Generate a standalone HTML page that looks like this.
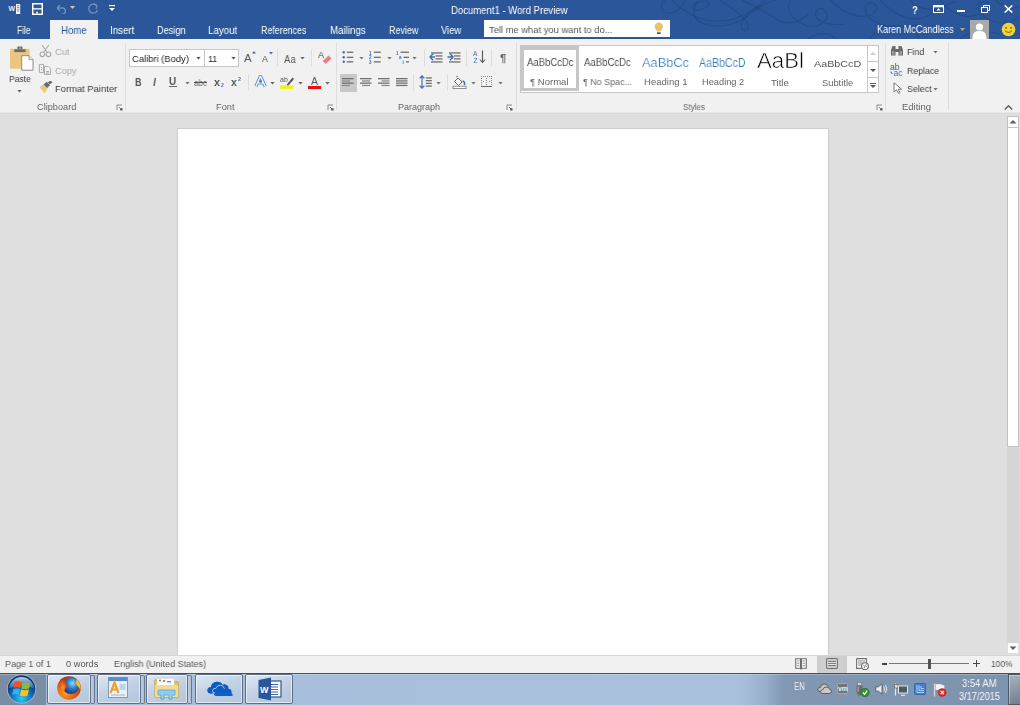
<!DOCTYPE html><html><head><meta charset="utf-8"><style>
html,body{margin:0;padding:0;width:1020px;height:705px;overflow:hidden;background:#DFDFDF}
.a{position:absolute;display:block}
.t{position:absolute;white-space:nowrap;line-height:1;font-family:"Liberation Sans",sans-serif;transform-origin:0 0;will-change:transform}
</style></head><body>
<div class="a" style="left:0px;top:0px;width:1020px;height:39px;background:#2B579A;"></div>
<svg class="a" style="left:640px;top:0px;" width="380" height="39" viewBox="0 0 380 39"><g fill="none" stroke="#1f4479" stroke-opacity="0.55" stroke-width="1.1">
<path d="M25 0 C18 6 22 14 31 13 C38 12 43 5 46 0"/>
<path d="M32 0 C42 10 52 17 66 20 C84 23 100 20 118 6 L126 0"/>
<path d="M58 2 C48 6 52 13 62 9 C70 6 72 1 64 1 C56 1 54 6 54 12 C54 20 62 25 76 26 C96 26 108 16 122 6"/>
<path d="M80 0 C92 8 104 16 108 24 C110 30 104 33 102 28 C100 22 106 14 116 8 C124 4 130 2 136 0"/>
<path d="M102 0 C114 6 126 12 138 20 C150 26 160 22 168 14"/>
<path d="M150 0 C146 10 152 22 168 26 C180 28 190 20 186 12 C182 6 174 8 176 16 C178 22 190 26 204 24"/>
<path d="M190 0 C200 10 214 18 226 16 C238 14 240 4 232 3 C224 2 222 12 232 20 C244 28 262 30 280 24"/>
<path d="M230 39 C236 30 248 24 262 26 C276 28 280 38 278 39"/>
<path d="M240 0 C252 12 266 22 282 18 C296 14 300 4 316 2"/>
<path d="M270 0 C276 8 290 12 300 8"/>
<path d="M300 0 C310 14 326 20 340 14 C352 8 350 0 342 2 C334 4 338 14 350 20 C362 26 374 22 380 16"/>
<path d="M320 39 C330 30 346 30 360 34"/>
<path d="M168 39 C176 32 190 32 196 39"/>
<path d="M356 0 C362 8 372 10 380 6"/>
</g></svg>
<svg class="a" style="left:8px;top:3px;" width="13" height="12" viewBox="0 0 13 12"><text x="0.6" y="8.2" font-family="Liberation Sans" font-weight="bold" font-size="7" fill="#e8eef8">W</text><rect x="8" y="1" width="4.2" height="10" fill="#fff"/><path d="M8.8 2.6h2.6M8.8 4.4h2.6M8.8 6.2h2.6M8.8 8h2.6" stroke="#2B579A" stroke-width="0.7"/></svg>
<svg class="a" style="left:32px;top:3px;" width="11" height="12" viewBox="0 0 11 12"><path d="M0.75 0.75h9.5v10.5h-9.5z" fill="none" stroke="#fff" stroke-width="1.5"/><rect x="0.5" y="5.2" width="10" height="1.3" fill="#fff"/><rect x="2.5" y="7.5" width="6" height="2.6" fill="#2B579A"/><rect x="4.2" y="8.6" width="1.6" height="2" fill="#fff"/></svg>
<svg class="a" style="left:55px;top:3px;" width="12" height="11" viewBox="0 0 12 11"><path d="M2 5 L5 2 M2 5 L5 8 M2 5 H8 A3.2 3.2 0 0 1 8 11.2 H6" fill="none" stroke="#6f8fc4" stroke-width="1.3"/></svg>
<svg class="a" style="left:70px;top:6px;" width="6" height="4" viewBox="0 0 6 4"><path d="M0 0h5l-2.5 3z" fill="#d8c9a8"/></svg>
<svg class="a" style="left:87px;top:3px;" width="12" height="11" viewBox="0 0 12 11"><path d="M9.5 2.5 A4.5 4.5 0 1 0 10.5 7" fill="none" stroke="#6f8fc4" stroke-width="1.3"/><path d="M7 0.5 L10 2.5 L9 6" fill="none" stroke="#6f8fc4" stroke-width="1.1"/></svg>
<svg class="a" style="left:109px;top:5px;" width="6" height="7" viewBox="0 0 6 7"><rect x="0" y="0" width="6" height="1.2" fill="#fff"/><path d="M0 3h6l-3 3z" fill="#fff"/></svg>
<div class="t" style="left:451px;top:6px;font-size:10.3px;color:#fff;transform:scaleX(0.9273);">Document1 - Word Preview</div>
<div class="t" style="left:912.3px;top:5px;font-size:11px;color:#fff;transform:scaleX(0.8632);font-weight:bold;">?</div>
<svg class="a" style="left:933px;top:5px;" width="11" height="8" viewBox="0 0 11 8"><rect x="0.5" y="0.5" width="10" height="7" fill="none" stroke="#fff" stroke-width="1"/><rect x="0.5" y="0.5" width="10" height="1.8" fill="#fff"/><path d="M5.5 3 L3.5 5.5 H7.5z" fill="#fff"/></svg>
<div class="a" style="left:957px;top:10px;width:8px;height:1.5px;background:#fff;"></div>
<svg class="a" style="left:981px;top:5px;" width="9" height="8" viewBox="0 0 9 8"><rect x="0.5" y="2.5" width="6" height="5" fill="none" stroke="#fff" stroke-width="1"/><path d="M2.5 2.5 V0.5 H8.5 V5.5 H6.5" fill="none" stroke="#fff" stroke-width="1"/></svg>
<svg class="a" style="left:1004px;top:5px;" width="9" height="8" viewBox="0 0 9 8"><path d="M0.7 0.5 L8.3 7.5 M8.3 0.5 L0.7 7.5" stroke="#fff" stroke-width="1.6"/></svg>
<div class="a" style="left:50px;top:20px;width:48px;height:19px;background:#F1F1F1;"></div>
<div class="t" style="left:16.5px;top:25px;font-size:10.6px;color:#fff;transform:scaleX(0.7904);">File</div>
<div class="t" style="left:61px;top:25px;font-size:10.6px;color:#2B579A;transform:scaleX(0.9125);">Home</div>
<div class="t" style="left:109.7px;top:25px;font-size:10.6px;color:#fff;transform:scaleX(0.9166);">Insert</div>
<div class="t" style="left:156.5px;top:25px;font-size:10.6px;color:#fff;transform:scaleX(0.8698);">Design</div>
<div class="t" style="left:208.3px;top:25px;font-size:10.6px;color:#fff;transform:scaleX(0.9206);">Layout</div>
<div class="t" style="left:260.7px;top:25px;font-size:10.6px;color:#fff;transform:scaleX(0.8357);">References</div>
<div class="t" style="left:329.6px;top:25px;font-size:10.6px;color:#fff;transform:scaleX(0.9182);">Mailings</div>
<div class="t" style="left:388.6px;top:25px;font-size:10.6px;color:#fff;transform:scaleX(0.8431);">Review</div>
<div class="t" style="left:441.2px;top:25px;font-size:10.6px;color:#fff;transform:scaleX(0.8910);">View</div>
<div class="a" style="left:484px;top:20px;width:186px;height:17px;background:#fff;"></div>
<div class="t" style="left:489.2px;top:25px;font-size:9.8px;color:#555;transform:scaleX(0.9567);">Tell me what you want to do...</div>
<svg class="a" style="left:654px;top:22px;" width="10" height="13" viewBox="0 0 10 13"><circle cx="4.8" cy="4.6" r="4.2" fill="#EBC06A"/><path d="M2 6.5 L3 9.6 H6.6 L7.6 6.5z" fill="#EBC06A"/><rect x="2.8" y="10.3" width="4" height="1.8" rx="0.8" fill="#555"/></svg>
<div class="t" style="left:877.3px;top:25px;font-size:10px;color:#fff;transform:scaleX(0.9079);">Karen McCandless</div>
<svg class="a" style="left:960px;top:28px;" width="5" height="3" viewBox="0 0 5 3"><path d="M0 0h5l-2.5 3z" fill="#b9a77e"/></svg>
<div class="a" style="left:970px;top:20px;width:19px;height:19px;background:#a9a9a9;"></div>
<svg class="a" style="left:970px;top:20px;" width="19" height="19" viewBox="0 0 19 19"><circle cx="9.5" cy="7" r="3.6" fill="#fff"/><path d="M2.5 19 C2.5 12 5.5 11 9.5 11 S16.5 12 16.5 19z" fill="#fff"/></svg>
<svg class="a" style="left:1001px;top:22px;" width="15" height="15" viewBox="0 0 15 15"><circle cx="7.5" cy="7.5" r="6.8" fill="#f2d43a"/><circle cx="5" cy="5.8" r="0.9" fill="#6b5a10"/><circle cx="10" cy="5.8" r="0.9" fill="#6b5a10"/><path d="M4 8.8 Q7.5 12 11 8.8" fill="none" stroke="#6b5a10" stroke-width="0.9"/></svg>
<div class="a" style="left:0px;top:39px;width:1020px;height:74px;background:#F1F1F1;"></div>
<div class="a" style="left:0px;top:112px;width:1020px;height:1px;background:#EAEAEA;"></div>
<div class="a" style="left:0px;top:113px;width:1020px;height:1px;background:#D9D9D9;"></div>
<svg class="a" style="left:9px;top:46px;" width="25" height="25" viewBox="0 0 25 25"><rect x="1" y="2.7" width="19.7" height="20.1" rx="1.2" fill="#EAC67E"/>
<rect x="5.3" y="3.3" width="11.2" height="2.8" fill="#6a6a6a"/>
<path d="M8.4 3.5 V1.2 Q8.4 0.6 9 0.6 H12.8 Q13.4 0.6 13.4 1.2 V3.5z" fill="#6a6a6a"/>
<rect x="10.2" y="1.6" width="1.6" height="1.2" fill="#EAC67E"/>
<path d="M12.7 9.7 H20 L24 13.7 V24.2 H12.7z" fill="#fff" stroke="#8a8a8a" stroke-width="1"/>
<path d="M20 9.7 V13.7 H24" fill="#e8e8e8" stroke="#8a8a8a" stroke-width="0.8"/></svg>
<div class="t" style="left:9px;top:74px;font-size:9.6px;color:#3c3c3c;transform:scaleX(0.8880);">Paste</div>
<svg class="a" style="left:17.4px;top:90px;" width="5" height="3" viewBox="0 0 5 3"><path d="M0.3 0h4.4l-2.2 2.6z" fill="#666"/></svg>
<svg class="a" style="left:39px;top:44px;" width="13" height="14" viewBox="0 0 13 14"><g fill="none" stroke="#a9a9a9" stroke-width="1.2">
<path d="M3 1 L8.3 8.5 M9.8 1 L4.5 8.5"/>
<circle cx="3.4" cy="10.3" r="2.3"/><circle cx="9.5" cy="10.3" r="2.3"/></g></svg>
<div class="t" style="left:54.9px;top:47px;font-size:9.6px;color:#a9a9a9;transform:scaleX(0.9706);">Cut</div>
<svg class="a" style="left:38px;top:63px;" width="14" height="13" viewBox="0 0 14 13"><g fill="none" stroke="#a9a9a9" stroke-width="1">
<path d="M1.4 1.4 H5.5 V9.6 H1.4z"/><path d="M6.4 3.4 H10.6 L12.6 5.4 V11.4 H6.4z"/>
<path d="M8 8.5h3M8 10h3M3 4.5h1.2M3 6.5h1.2"/></g></svg>
<div class="t" style="left:54.9px;top:66px;font-size:9.6px;color:#a9a9a9;transform:scaleX(0.9638);">Copy</div>
<svg class="a" style="left:39px;top:81px;" width="14" height="13" viewBox="0 0 14 13"><path d="M0.5 6.2 L4.8 3 L8.6 7.4 L5.6 12.3z" fill="#EAC67E"/>
<path d="M4.6 3.4 L7.8 0.8 L11 4.2 L8.2 7z" fill="#6a6a6a"/>
<path d="M8.8 1.6 L11.6 -0.6 L13.4 1.4 L10.8 3.6z" fill="#6a6a6a"/></svg>
<div class="t" style="left:54.7px;top:84px;font-size:9.6px;color:#3c3c3c;transform:scaleX(0.9781);">Format Painter</div>
<div class="t" style="left:36.7px;top:103px;font-size:8.9px;color:#666;transform:scaleX(1.0369);">Clipboard</div>
<svg class="a" style="left:116px;top:104px;" width="7" height="7" viewBox="0 0 7 7"><path d="M1 6V1H6" fill="none" stroke="#8a8a8a" stroke-width="1"/><path d="M3 3L5.5 5.5" stroke="#777" stroke-width="0.9"/><rect x="4.2" y="4.2" width="2.3" height="2.3" fill="#555"/></svg>
<div class="a" style="left:125px;top:43px;width:1px;height:67px;background:#dedede;"></div>
<div class="a" style="left:129px;top:49px;width:76px;height:18px;background:#fff;box-sizing:border-box;border:1px solid #c6c6c6;"></div>
<div class="a" style="left:204px;top:49px;width:35px;height:18px;background:#fff;box-sizing:border-box;border:1px solid #c6c6c6;"></div>
<div class="t" style="left:132.4px;top:54px;font-size:9.6px;color:#222;transform:scaleX(0.9802);">Calibri (Body)</div>
<svg class="a" style="left:196px;top:57px;" width="5" height="3" viewBox="0 0 5 3"><path d="M0.3 0h4.4l-2.2 2.6z" fill="#555"/></svg>
<div class="t" style="left:207.6px;top:54px;font-size:9.6px;color:#222;transform:scaleX(0.9232);">11</div>
<svg class="a" style="left:230.5px;top:57px;" width="5" height="3" viewBox="0 0 5 3"><path d="M0.3 0h4.4l-2.2 2.6z" fill="#555"/></svg>
<div class="t" style="left:244px;top:53px;font-size:11.5px;color:#555;">A</div>
<svg class="a" style="left:251.5px;top:51px;" width="4" height="3" viewBox="0 0 4 3"><path d="M0 2.5h4l-2-2.5z" fill="#3d6fb6"/></svg>
<div class="t" style="left:262px;top:55px;font-size:8.8px;color:#555;">A</div>
<svg class="a" style="left:268.5px;top:51.5px;" width="4" height="3" viewBox="0 0 4 3"><path d="M0 0h4l-2 2.5z" fill="#3d6fb6"/></svg>
<div class="a" style="left:277px;top:49px;width:1px;height:17px;background:#dedede;"></div>
<div class="t" style="left:284px;top:54px;font-size:11.2px;color:#555;transform:scaleX(0.8614);">Aa</div>
<svg class="a" style="left:299.5px;top:57px;" width="5" height="3" viewBox="0 0 5 3"><path d="M0.3 0h4.4l-2.2 2.6z" fill="#666"/></svg>
<div class="a" style="left:311px;top:49px;width:1px;height:17px;background:#dedede;"></div>
<svg class="a" style="left:318px;top:50px;" width="14" height="14" viewBox="0 0 14 14"><text x="0" y="8" font-family="Liberation Sans" font-size="9" fill="#555">A</text>
<path d="M4.5 11.5 L10.5 5.5 L13.5 8.5 L7.5 14z" fill="#e57f85"/><path d="M4.5 11.5 L7.5 14" stroke="#fff" stroke-width="0.7"/></svg>
<div class="t" style="left:134.6px;top:77px;font-size:10.6px;color:#555;transform:scaleX(0.8622);font-weight:bold;">B</div>
<div class="t" style="left:153.4px;top:77px;font-size:10.6px;color:#666;font-weight:bold;font-style:italic;">I</div>
<div class="t" style="left:169.4px;top:77px;font-size:10px;color:#555;transform:scaleX(0.9831);font-weight:bold;">U</div>
<div class="a" style="left:169.4px;top:85.6px;width:7.2px;height:1px;background:#666;"></div>
<svg class="a" style="left:185px;top:81.5px;" width="5" height="3" viewBox="0 0 5 3"><path d="M0.3 0h4.4l-2.2 2.6z" fill="#777"/></svg>
<div class="t" style="left:194.1px;top:79px;font-size:9px;color:#666;transform:scaleX(0.8890);">abc</div>
<div class="a" style="left:194px;top:82px;width:13px;height:1px;background:#555;"></div>
<div class="t" style="left:213.5px;top:77px;font-size:11.2px;color:#555;transform:scaleX(0.9633);font-weight:bold;">x</div>
<div class="t" style="left:220.6px;top:83px;font-size:5px;color:#3d6fb6;transform:scaleX(0.9351);font-weight:bold;">2</div>
<div class="t" style="left:231.4px;top:77px;font-size:11.2px;color:#555;transform:scaleX(0.9311);font-weight:bold;">x</div>
<div class="t" style="left:238px;top:77px;font-size:5px;color:#3d6fb6;transform:scaleX(1.0790);font-weight:bold;">2</div>
<div class="a" style="left:248px;top:74px;width:1px;height:16px;background:#dedede;"></div>
<svg class="a" style="left:254px;top:75px;" width="13" height="13" viewBox="0 0 13 13"><path d="M1.8 11.5 L6.5 1.2 L11.2 11.5 M3.8 7.8 H9.2" fill="none" stroke="#5b8fd0" stroke-width="3.2" stroke-linejoin="round"/><path d="M1.8 11.5 L6.5 1.2 L11.2 11.5 M3.8 7.8 H9.2" fill="none" stroke="#fff" stroke-width="1.3" stroke-linejoin="round"/><path d="M6.5 4.5 L7.8 7.5 H5.2z" fill="#3d6fb6"/></svg>
<svg class="a" style="left:270px;top:82px;" width="5" height="3" viewBox="0 0 5 3"><path d="M0.3 0h4.4l-2.2 2.6z" fill="#666"/></svg>
<svg class="a" style="left:280px;top:75px;" width="15" height="15" viewBox="0 0 15 15"><text x="0" y="7" font-family="Liberation Sans" font-size="7" fill="#555">ab</text>
<path d="M6.5 10 L12.5 2.5 L14 4 L8 11z" fill="#555"/>
<rect x="0.2" y="10.5" width="13.3" height="3.3" fill="#f7f000"/></svg>
<svg class="a" style="left:298px;top:82px;" width="5" height="3" viewBox="0 0 5 3"><path d="M0.3 0h4.4l-2.2 2.6z" fill="#666"/></svg>
<div class="t" style="left:310.6px;top:76px;font-size:10.5px;color:#555;">A</div>
<div class="a" style="left:307.6px;top:85.5px;width:13.2px;height:3.3px;background:#e81010;"></div>
<svg class="a" style="left:325px;top:82px;" width="5" height="3" viewBox="0 0 5 3"><path d="M0.3 0h4.4l-2.2 2.6z" fill="#666"/></svg>
<svg class="a" style="left:327px;top:104px;" width="7" height="7" viewBox="0 0 7 7"><path d="M1 6V1H6" fill="none" stroke="#8a8a8a" stroke-width="1"/><path d="M3 3L5.5 5.5" stroke="#777" stroke-width="0.9"/><rect x="4.2" y="4.2" width="2.3" height="2.3" fill="#555"/></svg>
<div class="t" style="left:215.5px;top:103px;font-size:8.9px;color:#666;transform:scaleX(1.0388);">Font</div>
<div class="a" style="left:336px;top:43px;width:1px;height:67px;background:#dedede;"></div>
<svg class="a" style="left:342px;top:50px;" width="13" height="14" viewBox="0 0 13 14"><circle cx="1.7" cy="2.2" r="1.2" fill="#3d6fb6"/><circle cx="1.7" cy="7.3" r="1.2" fill="#3d6fb6"/><circle cx="1.7" cy="11.8" r="1.2" fill="#3d6fb6"/><rect x="4.8" y="1.6" width="6.5" height="1.3" fill="#6f6f6f"/><rect x="4.8" y="6.7" width="6.5" height="1.3" fill="#6f6f6f"/><rect x="4.8" y="11.2" width="6.5" height="1.3" fill="#6f6f6f"/></svg>
<svg class="a" style="left:359px;top:57px;" width="5" height="3" viewBox="0 0 5 3"><path d="M0.3 0h4.4l-2.2 2.6z" fill="#777"/></svg>
<svg class="a" style="left:369px;top:50px;" width="13" height="14" viewBox="0 0 13 14"><text x="0" y="4.5" font-family="Liberation Sans" font-size="4.5" font-weight="bold" fill="#3d6fb6">1</text><text x="0" y="9" font-family="Liberation Sans" font-size="4.5" font-weight="bold" fill="#3d6fb6">2</text><text x="0" y="13.5" font-family="Liberation Sans" font-size="4.5" font-weight="bold" fill="#3d6fb6">3</text><rect x="4.8" y="1.6" width="7" height="1.3" fill="#6f6f6f"/><rect x="4.8" y="6.7" width="7" height="1.3" fill="#6f6f6f"/><rect x="4.8" y="11.2" width="7" height="1.3" fill="#6f6f6f"/></svg>
<svg class="a" style="left:386.5px;top:57px;" width="5" height="3" viewBox="0 0 5 3"><path d="M0.3 0h4.4l-2.2 2.6z" fill="#777"/></svg>
<svg class="a" style="left:396px;top:50px;" width="14" height="14" viewBox="0 0 14 14"><text x="0" y="4.5" font-family="Liberation Sans" font-size="4.5" font-weight="bold" fill="#3d6fb6">1</text><text x="3" y="9" font-family="Liberation Sans" font-size="4.5" font-weight="bold" fill="#3d6fb6">a</text><text x="6.5" y="13.5" font-family="Liberation Sans" font-size="4.5" font-weight="bold" fill="#3d6fb6">i</text><rect x="4.5" y="1.6" width="8.5" height="1.3" fill="#6f6f6f"/><rect x="7.5" y="6.7" width="5.5" height="1.3" fill="#6f6f6f"/><rect x="10" y="11.2" width="3" height="1.3" fill="#6f6f6f"/></svg>
<svg class="a" style="left:412px;top:57px;" width="5" height="3" viewBox="0 0 5 3"><path d="M0.3 0h4.4l-2.2 2.6z" fill="#777"/></svg>
<div class="a" style="left:424px;top:49px;width:1px;height:17px;background:#dedede;"></div>
<svg class="a" style="left:429px;top:52px;" width="14" height="11" viewBox="0 0 14 11"><path d="M0.8 5 L4.2 1.8 M0.8 5 L4.2 8.2 M0.8 5 H6" fill="none" stroke="#3d6fb6" stroke-width="1.4"/><rect x="2" y="0.3" width="11.5" height="1.3" fill="#6f6f6f"/><rect x="2" y="9.3" width="11.5" height="1.3" fill="#6f6f6f"/><rect x="6.5" y="3.3" width="7" height="1.3" fill="#6f6f6f"/><rect x="6.5" y="6.2" width="7" height="1.3" fill="#6f6f6f"/></svg>
<svg class="a" style="left:447px;top:52px;" width="14" height="11" viewBox="0 0 14 11"><path d="M6.3 5 L2.9 1.8 M6.3 5 L2.9 8.2 M6.3 5 H0.5" fill="none" stroke="#3d6fb6" stroke-width="1.4"/><rect x="2" y="0.3" width="11.5" height="1.3" fill="#6f6f6f"/><rect x="2" y="9.3" width="11.5" height="1.3" fill="#6f6f6f"/><rect x="7" y="3.3" width="6.5" height="1.3" fill="#6f6f6f"/><rect x="7" y="6.2" width="6.5" height="1.3" fill="#6f6f6f"/></svg>
<div class="a" style="left:466px;top:49px;width:1px;height:17px;background:#dedede;"></div>
<svg class="a" style="left:473px;top:50px;" width="13" height="14" viewBox="0 0 13 14"><text x="0" y="6" font-family="Liberation Sans" font-size="6.5" fill="#3d6fb6">A</text><text x="0.5" y="13" font-family="Liberation Sans" font-size="6.5" fill="#3d6fb6">Z</text><path d="M9.5 0.5 V12.5 M6.8 9.5 L9.5 12.5 L12.2 9.5" fill="none" stroke="#555" stroke-width="1.1"/></svg>
<div class="a" style="left:491px;top:49px;width:1px;height:17px;background:#dedede;"></div>
<div class="t" style="left:499.5px;top:53px;font-size:11.5px;color:#666;font-weight:bold;">¶</div>
<div class="a" style="left:340px;top:73.5px;width:17px;height:18px;background:#c8c8c8;"></div>
<svg class="a" style="left:342px;top:78px;" width="13" height="9" viewBox="0 0 13 9"><rect x="0" y="0" width="11.5" height="1.3" fill="#6f6f6f"/><rect x="0" y="4.5" width="11.5" height="1.3" fill="#6f6f6f"/><rect x="0" y="2.3" width="8" height="1.3" fill="#8a8a8a"/><rect x="0" y="6.8" width="8" height="1.3" fill="#8a8a8a"/></svg>
<svg class="a" style="left:360px;top:78px;" width="13" height="9" viewBox="0 0 13 9"><rect x="0" y="0" width="11.5" height="1.3" fill="#6f6f6f"/><rect x="0" y="4.5" width="11.5" height="1.3" fill="#6f6f6f"/><rect x="2" y="2.3" width="8" height="1.3" fill="#8a8a8a"/><rect x="2" y="6.8" width="8" height="1.3" fill="#8a8a8a"/></svg>
<svg class="a" style="left:377.5px;top:78px;" width="13" height="9" viewBox="0 0 13 9"><rect x="0" y="0" width="11.5" height="1.3" fill="#6f6f6f"/><rect x="0" y="4.5" width="11.5" height="1.3" fill="#6f6f6f"/><rect x="3.5" y="2.3" width="8" height="1.3" fill="#8a8a8a"/><rect x="3.5" y="6.8" width="8" height="1.3" fill="#8a8a8a"/></svg>
<svg class="a" style="left:395.5px;top:78px;" width="13" height="9" viewBox="0 0 13 9"><rect x="0" y="0" width="11.5" height="1.3" fill="#6f6f6f"/><rect x="0" y="2.3" width="11.5" height="1.3" fill="#6f6f6f"/><rect x="0" y="4.5" width="11.5" height="1.3" fill="#6f6f6f"/><rect x="0" y="6.8" width="11.5" height="1.3" fill="#6f6f6f"/></svg>
<div class="a" style="left:413px;top:74px;width:1px;height:17px;background:#dedede;"></div>
<svg class="a" style="left:419px;top:75px;" width="14" height="14" viewBox="0 0 14 14"><path d="M3 0.8 V13 M0.6 3.3 L3 0.8 L5.4 3.3 M0.6 10.7 L3 13.2 L5.4 10.7" fill="none" stroke="#3d6fb6" stroke-width="1.2"/><rect x="6.8" y="2.3" width="6" height="1.3" fill="#6f6f6f"/><rect x="6.8" y="5" width="6" height="1.3" fill="#6f6f6f"/><rect x="6.8" y="7.7" width="6" height="1.3" fill="#6f6f6f"/><rect x="6.8" y="10.4" width="6" height="1.3" fill="#6f6f6f"/></svg>
<svg class="a" style="left:435.5px;top:82px;" width="5" height="3" viewBox="0 0 5 3"><path d="M0.3 0h4.4l-2.2 2.6z" fill="#777"/></svg>
<div class="a" style="left:447px;top:74px;width:1px;height:17px;background:#dedede;"></div>
<svg class="a" style="left:452px;top:75px;" width="15" height="14" viewBox="0 0 15 14"><path d="M2.5 6.5 L6 3 L10 7 L6.5 10.5z" fill="#fff" stroke="#666" stroke-width="1"/><path d="M5 2.5 V0.8" stroke="#666" stroke-width="1"/><path d="M10.5 6 Q13.5 7 12.3 10" fill="none" stroke="#3d6fb6" stroke-width="1.5"/><rect x="1" y="11.2" width="13" height="2.4" fill="#fff" stroke="#777" stroke-width="0.8"/></svg>
<svg class="a" style="left:470.5px;top:82px;" width="5" height="3" viewBox="0 0 5 3"><path d="M0.3 0h4.4l-2.2 2.6z" fill="#777"/></svg>
<svg class="a" style="left:481px;top:76px;" width="11" height="11" viewBox="0 0 11 11"><g fill="#888"><rect x="0" y="0" width="1" height="1"/><rect x="2" y="0" width="1" height="1"/><rect x="4" y="0" width="1" height="1"/><rect x="6" y="0" width="1" height="1"/><rect x="8" y="0" width="1" height="1"/><rect x="10" y="0" width="1" height="1"/><rect x="0" y="2" width="1" height="1"/><rect x="0" y="4" width="1" height="1"/><rect x="0" y="6" width="1" height="1"/><rect x="0" y="8" width="1" height="1"/><rect x="10" y="2" width="1" height="1"/><rect x="10" y="4" width="1" height="1"/><rect x="10" y="6" width="1" height="1"/><rect x="10" y="8" width="1" height="1"/><rect x="5" y="2" width="1" height="1"/><rect x="5" y="4" width="1" height="1"/><rect x="5" y="6" width="1" height="1"/><rect x="5" y="8" width="1" height="1"/><rect x="2" y="5" width="1" height="1"/><rect x="8" y="5" width="1" height="1"/></g><rect x="0" y="10" width="11" height="1" fill="#666"/></svg>
<svg class="a" style="left:497.5px;top:82px;" width="5" height="3" viewBox="0 0 5 3"><path d="M0.3 0h4.4l-2.2 2.6z" fill="#777"/></svg>
<svg class="a" style="left:506px;top:104px;" width="7" height="7" viewBox="0 0 7 7"><path d="M1 6V1H6" fill="none" stroke="#8a8a8a" stroke-width="1"/><path d="M3 3L5.5 5.5" stroke="#777" stroke-width="0.9"/><rect x="4.2" y="4.2" width="2.3" height="2.3" fill="#555"/></svg>
<div class="t" style="left:398.4px;top:103px;font-size:8.9px;color:#666;transform:scaleX(1.0153);">Paragraph</div>
<div class="a" style="left:516px;top:43px;width:1px;height:67px;background:#dedede;"></div>
<div class="a" style="left:520px;top:45px;width:359px;height:48px;background:#c6c6c6;"></div>
<div class="a" style="left:521px;top:46px;width:346px;height:46px;background:#fff;"></div>
<div class="a" style="left:521px;top:46px;width:58px;height:45px;background:#c6c6c6;"></div>
<div class="a" style="left:524px;top:49.5px;width:52px;height:38.5px;background:#fff;"></div>
<div class="t" style="left:526.6px;top:58px;font-size:10.4px;color:#222;transform:scaleX(0.9162);-webkit-text-stroke:0.15px #fff;">AaBbCcDc</div>
<div class="t" style="left:530.3px;top:78px;font-size:9.2px;color:#666;transform:scaleX(1.0391);">¶ Normal</div>
<div class="t" style="left:583.9px;top:58px;font-size:10.4px;color:#222;transform:scaleX(0.9221);-webkit-text-stroke:0.15px #fff;">AaBbCcDc</div>
<div class="t" style="left:583px;top:78px;font-size:9.2px;color:#666;transform:scaleX(0.9712);">¶ No Spac...</div>
<div class="t" style="left:641.6px;top:56px;font-size:13.6px;color:#2e74b5;transform:scaleX(0.9420);-webkit-text-stroke:0.2px #fff;">AaBbCc</div>
<div class="t" style="left:643.5px;top:78px;font-size:9.2px;color:#666;transform:scaleX(1.0371);">Heading 1</div>
<div class="t" style="left:699.2px;top:57px;font-size:12px;color:#2e74b5;transform:scaleX(0.8844);-webkit-text-stroke:0.15px #fff;">AaBbCcD</div>
<div class="t" style="left:701.7px;top:78px;font-size:9.2px;color:#666;transform:scaleX(1.0085);">Heading 2</div>
<div class="t" style="left:757.1px;top:50px;font-size:22px;color:#000;transform:scaleX(1.0092);-webkit-text-stroke:0.6px #fff;">AaBl</div>
<div class="t" style="left:770.6px;top:79px;font-size:9.2px;color:#666;transform:scaleX(1.0447);">Title</div>
<div class="t" style="left:814.4px;top:59px;font-size:9.8px;color:#555;transform:scaleX(1.0970);">AaBbCcD</div>
<div class="t" style="left:821.8px;top:79px;font-size:9.2px;color:#666;transform:scaleX(1.0168);">Subtitle</div>
<div class="a" style="left:867px;top:45px;width:12px;height:48px;background:#c6c6c6;"></div>
<div class="a" style="left:868px;top:46px;width:10px;height:15px;background:#fff;"></div>
<div class="a" style="left:868px;top:62px;width:10px;height:15px;background:#fff;"></div>
<div class="a" style="left:868px;top:78px;width:10px;height:14px;background:#fff;"></div>
<svg class="a" style="left:870px;top:52px;" width="6" height="3" viewBox="0 0 6 3"><path d="M0 3h6l-3-3z" fill="#ccc"/></svg>
<svg class="a" style="left:870px;top:69px;" width="6" height="3" viewBox="0 0 6 3"><path d="M0 0h6l-3 3z" fill="#555"/></svg>
<svg class="a" style="left:870px;top:83px;" width="6" height="5" viewBox="0 0 6 5"><rect x="0" y="0" width="6" height="1" fill="#555"/><path d="M0 2h6l-3 3z" fill="#555"/></svg>
<div class="t" style="left:683px;top:103px;font-size:8.9px;color:#666;transform:scaleX(0.9077);">Styles</div>
<svg class="a" style="left:876px;top:104px;" width="7" height="7" viewBox="0 0 7 7"><path d="M1 6V1H6" fill="none" stroke="#8a8a8a" stroke-width="1"/><path d="M3 3L5.5 5.5" stroke="#777" stroke-width="0.9"/><rect x="4.2" y="4.2" width="2.3" height="2.3" fill="#555"/></svg>
<div class="a" style="left:885px;top:43px;width:1px;height:67px;background:#dedede;"></div>
<svg class="a" style="left:890px;top:45px;" width="14" height="11" viewBox="0 0 14 11"><path d="M1 5 L2.5 1 H5.5 V4 H8.5 V1 H11.5 L13 5 V10.5 H8.5 V7 H5.5 V10.5 H1z" fill="#6a6a6a"/><rect x="2" y="6" width="2.5" height="4" fill="#999"/><rect x="9.5" y="6" width="2.5" height="4" fill="#999"/></svg>
<div class="t" style="left:906.8px;top:47px;font-size:9.6px;color:#3c3c3c;transform:scaleX(0.9317);">Find</div>
<svg class="a" style="left:932.5px;top:51px;" width="5" height="3" viewBox="0 0 5 3"><path d="M0.3 0h4.4l-2.2 2.6z" fill="#777"/></svg>
<svg class="a" style="left:890px;top:63px;" width="15" height="13" viewBox="0 0 15 13"><text x="0" y="6.8" font-family="Liberation Sans" font-size="8.6" fill="#555">ab</text><text x="3.6" y="12.8" font-family="Liberation Sans" font-size="8.6" fill="#3d6fb6">ac</text><path d="M0.8 8.5 L2.2 11" stroke="#3d6fb6" stroke-width="1.1"/></svg>
<div class="t" style="left:906.8px;top:66px;font-size:9.6px;color:#3c3c3c;transform:scaleX(0.9142);">Replace</div>
<svg class="a" style="left:893px;top:82px;" width="10" height="12" viewBox="0 0 10 12"><path d="M1 0.8 V10 L3.5 7.8 L5.5 11.5 L7 10.8 L5.2 7.2 H8.5z" fill="#fff" stroke="#777" stroke-width="1"/></svg>
<div class="t" style="left:906.8px;top:84px;font-size:9.6px;color:#3c3c3c;transform:scaleX(0.9257);">Select</div>
<svg class="a" style="left:933.2px;top:88px;" width="5" height="3" viewBox="0 0 5 3"><path d="M0.3 0h4.4l-2.2 2.6z" fill="#777"/></svg>
<div class="t" style="left:902px;top:103px;font-size:8.9px;color:#666;transform:scaleX(1.0657);">Editing</div>
<div class="a" style="left:948px;top:43px;width:1px;height:67px;background:#dedede;"></div>
<svg class="a" style="left:1004px;top:105px;" width="9" height="5" viewBox="0 0 9 5"><path d="M0.8 4.5 L4.5 0.8 L8.2 4.5" fill="none" stroke="#555" stroke-width="1.3"/></svg>
<div class="a" style="left:0px;top:114px;width:1020px;height:541px;background:#DFDFDF;"></div>
<div class="a" style="left:177px;top:128px;width:652px;height:527px;background:#CDCDCD;"></div>
<div class="a" style="left:178px;top:129px;width:650px;height:526px;background:#fff;"></div>
<div class="a" style="left:1007px;top:116px;width:12px;height:12px;background:#C2C2C2;"></div>
<div class="a" style="left:1008px;top:117px;width:10px;height:10px;background:#fff;"></div>
<svg class="a" style="left:1009px;top:119px;" width="8" height="5" viewBox="0 0 8 5"><path d="M0.5 4.5 L4 1 L7.5 4.5z" fill="#606060"/></svg>
<div class="a" style="left:1007px;top:128px;width:12px;height:319px;background:#C2C2C2;"></div>
<div class="a" style="left:1008px;top:128px;width:10px;height:318px;background:#fff;"></div>
<div class="a" style="left:1007px;top:447px;width:12px;height:196px;background:#D6D6D6;"></div>
<div class="a" style="left:1008px;top:643px;width:10px;height:10px;background:#fff;"></div>
<svg class="a" style="left:1009px;top:646px;" width="8" height="5" viewBox="0 0 8 5"><path d="M0.5 0.5 L4 4 L7.5 0.5z" fill="#606060"/></svg>
<div class="a" style="left:0px;top:656px;width:1020px;height:17px;background:#F1F1F1;"></div>
<div class="a" style="left:0px;top:655px;width:1020px;height:1px;background:#D6D6D6;"></div>
<div class="t" style="left:5.4px;top:660px;font-size:9.2px;color:#555;transform:scaleX(0.9753);">Page 1 of 1</div>
<div class="t" style="left:66.4px;top:660px;font-size:9.2px;color:#555;transform:scaleX(1.0058);">0 words</div>
<div class="t" style="left:114.3px;top:660px;font-size:9.2px;color:#555;transform:scaleX(0.9810);">English (United States)</div>
<div class="a" style="left:817px;top:656px;width:30px;height:17px;background:#CFCFCF;"></div>
<svg class="a" style="left:795px;top:658px;" width="12" height="12" viewBox="0 0 12 12"><path d="M0.7 0.7 H5.5 V10.3 H0.7z M6.5 0.7 H11.3 V10.3 H6.5z" fill="#fafafa" stroke="#6f6f6f" stroke-width="1.1"/><path d="M6 0.5 V11.8" stroke="#6f6f6f" stroke-width="1.1"/><path d="M2 3h2.3M2 5.3h2.3M2 7.6h2.3M7.7 3h2.3M7.7 5.3h2.3M7.7 7.6h2.3" stroke="#8a8a8a" stroke-width="0.9"/></svg>
<svg class="a" style="left:826px;top:658px;" width="12" height="11" viewBox="0 0 12 11"><rect x="0.6" y="0.6" width="10.8" height="9.8" rx="1" fill="#e4e4e4" stroke="#707070" stroke-width="1.1"/><path d="M2 3.3h8M2 5.5h8M2 7.7h8" stroke="#7a7a7a" stroke-width="1.2"/></svg>
<svg class="a" style="left:856px;top:658px;" width="13" height="12" viewBox="0 0 13 12"><path d="M0.6 0.6 H10.4 V5.5 M0.6 0.6 V10.4 H5.5" fill="#fafafa" stroke="#707070" stroke-width="1.1"/><path d="M2 3h7M2 5h4.5M2 7h3" stroke="#8a8a8a" stroke-width="0.9"/><circle cx="9" cy="8.2" r="3.4" fill="#fff" stroke="#666" stroke-width="1.1"/><path d="M7.3 7 L8.8 8.3 L8 10.2 M10.4 6.2 L9.6 7.6 L11 8.6" fill="none" stroke="#666" stroke-width="0.9"/></svg>
<div class="t" style="left:991.3px;top:660px;font-size:9.2px;color:#555;transform:scaleX(0.9222);">100%</div>
<div class="a" style="left:889px;top:663px;width:80px;height:1px;background:#777;"></div>
<div class="a" style="left:928px;top:659px;width:3px;height:10px;background:#555;"></div>
<div class="a" style="left:882px;top:663px;width:5px;height:1.5px;background:#444;"></div>
<div class="a" style="left:973px;top:662.5px;width:7px;height:1.6px;background:#444;"></div>
<div class="a" style="left:975.7px;top:659.7px;width:1.6px;height:7.2px;background:#444;"></div>
<div class="a" style="left:0px;top:673px;width:1020px;height:32px;background:#A8C0DC;"></div>
<div class="a" style="left:0px;top:673px;width:1020px;height:1px;background:#4a5563;"></div>
<div class="a" style="left:0px;top:673px;width:1020px;height:32px;background:linear-gradient(to right,#7b8ca5 0px,#7b8ca5 46px,#a6bedb 46px,#a8c0dc 740px,#98b0cc 765px,#8197b2 785px,#7e93ad 1020px);"></div>
<div class="a" style="left:0px;top:673px;width:1020px;height:1px;background:#46505c;"></div>
<div class="a" style="left:0px;top:674px;width:1020px;height:1px;background:rgba(255,255,255,0.25);"></div>
<svg class="a" style="left:6px;top:674px;" width="31" height="31" viewBox="0 0 31 31"><defs>
<radialGradient id="og" cx="50%" cy="85%" r="65%"><stop offset="0" stop-color="#22d0f5"/><stop offset="0.45" stop-color="#1780c8"/><stop offset="0.8" stop-color="#0f4f98"/><stop offset="1" stop-color="#0b3a78"/></radialGradient>
<linearGradient id="gl" x1="0" y1="0" x2="0" y2="1"><stop offset="0" stop-color="#dfe8f2" stop-opacity="0.85"/><stop offset="1" stop-color="#9fb4cc" stop-opacity="0.35"/></linearGradient>
</defs>
<circle cx="15.5" cy="15" r="14.6" fill="#a9bbd0"/>
<circle cx="15.5" cy="15" r="13.8" fill="url(#og)"/>
<path d="M3 14 A12.6 12.6 0 0 1 28 14 Q15.5 10 3 14z" fill="url(#gl)"/>
<g transform="translate(15.8 14.8) scale(1.12) translate(-14.5 -12.5)">
<path d="M8.2 6.2 Q11 5 14.3 6.5 L13.2 11.8 Q10.5 10.5 7.2 11.6z" fill="#f0541a"/>
<path d="M15.2 6.8 Q18.5 8 22.2 6.6 L21 12.2 Q17.8 13.4 14.1 12.2z" fill="#7fc040"/>
<path d="M7 12.6 Q10.3 11.6 13 12.8 L11.9 18 Q9 16.8 6 17.9z" fill="#35b0ec"/>
<path d="M13.9 13.2 Q17.6 14.4 20.8 13.2 L19.6 18.6 Q16.4 19.8 12.8 18.4z" fill="#f8c020"/>
</g></svg>
<div class="a" style="left:47px;top:674px;width:44px;height:30px;background:linear-gradient(160deg,#dfe8f3 0%,#c3d2e4 45%,#b3c6dc 100%);box-sizing:border-box;border:1px solid #5f6f85;border-radius:2px;box-shadow:inset 0 0 0 1px rgba(255,255,255,0.55);"></div>
<div class="a" style="left:91px;top:675px;width:4px;height:29px;background:linear-gradient(to right,#c0d0e2,#a9bdd6);box-sizing:border-box;border:1px solid #6a7a90;border-left:none;border-radius:0 2px 2px 0;"></div>
<div class="a" style="left:97px;top:674px;width:44px;height:30px;background:linear-gradient(160deg,#dfe8f3 0%,#c3d2e4 45%,#b3c6dc 100%);box-sizing:border-box;border:1px solid #5f6f85;border-radius:2px;box-shadow:inset 0 0 0 1px rgba(255,255,255,0.55);"></div>
<div class="a" style="left:141px;top:675px;width:4px;height:29px;background:linear-gradient(to right,#c0d0e2,#a9bdd6);box-sizing:border-box;border:1px solid #6a7a90;border-left:none;border-radius:0 2px 2px 0;"></div>
<div class="a" style="left:146px;top:674px;width:42px;height:30px;background:linear-gradient(160deg,#dfe8f3 0%,#c3d2e4 45%,#b3c6dc 100%);box-sizing:border-box;border:1px solid #5f6f85;border-radius:2px;box-shadow:inset 0 0 0 1px rgba(255,255,255,0.55);"></div>
<div class="a" style="left:188px;top:675px;width:4px;height:29px;background:linear-gradient(to right,#c0d0e2,#a9bdd6);box-sizing:border-box;border:1px solid #6a7a90;border-left:none;border-radius:0 2px 2px 0;"></div>
<div class="a" style="left:195px;top:674px;width:48px;height:30px;background:linear-gradient(160deg,#dfe8f3 0%,#c3d2e4 45%,#b3c6dc 100%);box-sizing:border-box;border:1px solid #5f6f85;border-radius:2px;box-shadow:inset 0 0 0 1px rgba(255,255,255,0.55);"></div>
<div class="a" style="left:245px;top:674px;width:48px;height:30px;background:linear-gradient(160deg,#dfe8f3 0%,#c3d2e4 45%,#b3c6dc 100%);box-sizing:border-box;border:1px solid #5f6f85;border-radius:2px;box-shadow:inset 0 0 0 1px rgba(255,255,255,0.55);"></div>
<svg class="a" style="left:56px;top:675px;" width="26" height="26" viewBox="0 0 26 26"><defs><radialGradient id="ffg" cx="60%" cy="35%" r="60%"><stop offset="0" stop-color="#8ee0fa"/><stop offset="0.5" stop-color="#2f80cf"/><stop offset="1" stop-color="#1b3f8c"/></radialGradient>
<radialGradient id="ffo" cx="35%" cy="70%" r="70%"><stop offset="0" stop-color="#f7a21b"/><stop offset="0.55" stop-color="#e4601d"/><stop offset="1" stop-color="#b8340f"/></radialGradient></defs>
<circle cx="13" cy="13" r="11.8" fill="url(#ffo)"/>
<circle cx="14.8" cy="10.8" r="8.3" fill="url(#ffg)"/>
<path d="M4 5 Q7 2.5 10 4.5 Q8 6 9.5 8.5 Q12 9 11 12 Q8 14 9 17 Q6 15 5 11z" fill="url(#ffo)"/>
<path d="M20.5 4 Q25.5 9 24.5 15 Q22 11 20 9z" fill="#f3c12a"/></svg>
<svg class="a" style="left:106px;top:676px;" width="24" height="24" viewBox="0 0 24 24"><rect x="2.5" y="1.5" width="19" height="20" fill="#e8f1fa" stroke="#7d9cc0" stroke-width="1"/>
<rect x="2.5" y="1.5" width="19" height="3.5" fill="#5a8ccc"/>
<path d="M4.5 17 L8.5 6.5 L12.5 17 M6 13.5 H11" fill="none" stroke="#f0a020" stroke-width="2.2"/>
<path d="M13.5 9h6M13.5 11h6M13.5 13h6M5 19h14" stroke="#8ab0d8" stroke-width="0.9"/></svg>
<svg class="a" style="left:153px;top:676px;" width="28" height="26" viewBox="0 0 28 26"><path d="M2 4 H10 L12 6 H25 V21 H2z" fill="#e8c86a" stroke="#c9a24a" stroke-width="0.8"/>
<rect x="4" y="2.5" width="17" height="7" fill="#fff" stroke="#ccc" stroke-width="0.5"/>
<circle cx="7" cy="4.5" r="1" fill="#3a3"/><circle cx="11" cy="5" r="1" fill="#d33"/><rect x="14" y="5" width="4" height="1.5" fill="#3af"/>
<path d="M2 9 H25 V21 H2z" fill="#f4dc8c"/>
<path d="M5 14 H22 V19 H19 V23 H16 V19 H11 V23 H8 V19 H5z" fill="#8fcdf0" stroke="#5aa6dc" stroke-width="0.8"/></svg>
<svg class="a" style="left:207px;top:680px;" width="27" height="18" viewBox="0 0 27 18"><path d="M4 13.5 Q0.3 13.5 0.5 10 Q0.8 7 4 7.2 Q4.8 2 10 1.8 Q14 1.8 15.8 5.2 Q18 4.2 20 5.5" fill="#0d5ec8"/>
<path d="M9.5 16.5 Q6.2 16.5 6.3 13.6 Q6.5 10.8 9.5 10.8 Q10.5 6.5 15 6.5 Q18.5 6.5 19.8 9.5 Q22 8.5 24 10 Q25.6 11.5 25.3 13.5 Q26.5 14 26.3 15.2 Q26 16.5 24.5 16.5z" fill="#0d5ec8" stroke="#b9c9dd" stroke-width="1.2"/>
<path d="M4 13.5 Q0.3 13.5 0.5 10 Q0.8 7 4 7.2 Q4.8 2 10 1.8 Q14 1.8 15.8 5.2 Q17.5 4.4 19.5 5.3 Q14.5 6 12 9.5 Q8 9.5 6.5 13.5z" fill="#0d5ec8"/></svg>
<svg class="a" style="left:106px;top:676px;" width="24" height="24" viewBox="0 0 24 24"><rect x="2.5" y="1.5" width="19" height="20" fill="#e8f1fa" stroke="#7d9cc0" stroke-width="1"/>
<rect x="2.5" y="1.5" width="19" height="3.5" fill="#5a8ccc"/>
<path d="M4.5 17 L8.5 6.5 L12.5 17 M6 13.5 H11" fill="none" stroke="#f0a020" stroke-width="2.2"/>
<path d="M13.5 9h6M13.5 11h6M13.5 13h6M5 19h14" stroke="#8ab0d8" stroke-width="0.9"/></svg>
<svg class="a" style="left:153px;top:676px;" width="28" height="26" viewBox="0 0 28 26"><path d="M2 4 H10 L12 6 H25 V21 H2z" fill="#e8c86a" stroke="#c9a24a" stroke-width="0.8"/>
<rect x="4" y="2.5" width="17" height="7" fill="#fff" stroke="#ccc" stroke-width="0.5"/>
<circle cx="7" cy="4.5" r="1" fill="#3a3"/><circle cx="11" cy="5" r="1" fill="#d33"/><rect x="14" y="5" width="4" height="1.5" fill="#3af"/>
<path d="M2 9 H25 V21 H2z" fill="#f4dc8c"/>
<path d="M5 14 H22 V19 H19 V23 H16 V19 H11 V23 H8 V19 H5z" fill="#8fcdf0" stroke="#5aa6dc" stroke-width="0.8"/></svg>
<svg class="a" style="left:208px;top:680px;" width="24" height="14" viewBox="0 0 24 14"><path d="M3.5 13 Q0 13 0.5 9.5 Q1 6.8 4 7 Q5 2.5 9.5 2.5 Q12.5 2.5 14 5 Q16.5 3.5 19 5.2 Q21 6.5 20.5 8.8 Q23.5 9.3 23.5 11.2 Q23.5 13 21.5 13z" fill="#0a5bc4"/>
<path d="M7 13 Q4.2 13 4.5 10.5 Q5 8 8 8.3 Q9 5 12.5 5.2 Q15.8 5.5 16.5 8.8" fill="none" stroke="#b8c8dc" stroke-width="0.9"/></svg>
<svg class="a" style="left:257px;top:677px;" width="26" height="24" viewBox="0 0 26 24"><rect x="9" y="4" width="15" height="16" fill="#fff" stroke="#2b579a" stroke-width="1.2"/>
<path d="M12 7.5h9M12 10h9M12 12.5h9M12 15h9M12 17.5h9" stroke="#2b579a" stroke-width="0.9"/>
<path d="M1.5 3 L14 0.5 V23.5 L1.5 21z" fill="#2b579a"/>
<text x="3" y="15.5" font-family="Liberation Sans" font-weight="bold" font-size="9" fill="#fff">W</text></svg>
<div class="t" style="left:793.7px;top:682px;font-size:10.4px;color:#eef2f7;transform:scaleX(0.7406);">EN</div>
<svg class="a" style="left:817px;top:683px;" width="15" height="11" viewBox="0 0 15 11"><path d="M3 8.5 Q0.5 8.5 0.8 6.3 Q1.2 4.3 3.3 4.5 Q4 1 7.5 1 Q10 1 11 3.5" fill="#c4c4c4" stroke="#555" stroke-width="0.9"/><path d="M5.5 10.5 Q3.3 10.5 3.5 8.5 Q3.8 6.6 5.8 6.8 Q6.5 4 9.5 4 Q12 4 12.8 6.5 Q14.5 6.8 14.4 8.6 Q14.3 10.5 12.5 10.5z" fill="#c8c8c8" stroke="#555" stroke-width="0.9"/></svg>
<svg class="a" style="left:837px;top:683px;" width="11" height="11" viewBox="0 0 11 11"><rect x="0.5" y="0.5" width="10" height="10" rx="1" fill="#747474" stroke="#a8a8a8" stroke-width="1"/><text x="1" y="8" font-family="Liberation Sans" font-weight="bold" font-size="6.8" fill="#f2f2f2">vm</text></svg>
<svg class="a" style="left:855px;top:682px;" width="15" height="15" viewBox="0 0 15 15"><rect x="2.5" y="0.5" width="4" height="3" fill="#d0d0d0" stroke="#777" stroke-width="0.6"/><path d="M1.5 3.5 H7.5 V10 L6 13.5 H3 L1.5 10z" fill="#6d6d6d"/><rect x="2.5" y="4.5" width="1.5" height="5" fill="#999"/><circle cx="10" cy="10.5" r="4.2" fill="#2e9a33" stroke="#1c5e22" stroke-width="0.6"/><path d="M8 10.5 L9.6 12.3 L12.2 8.6" fill="none" stroke="#fff" stroke-width="1.2"/></svg>
<svg class="a" style="left:875px;top:683px;" width="13" height="12" viewBox="0 0 13 12"><path d="M0.8 3.8 H3.5 L7 0.8 V11.2 L3.5 8.2 H0.8z" fill="#ececec" stroke="#5a5a5a" stroke-width="0.9"/><path d="M8.8 3.5 Q10.2 6 8.8 8.5 M10.5 2 Q12.8 6 10.5 10" fill="none" stroke="#eaeaea" stroke-width="1"/></svg>
<svg class="a" style="left:894px;top:683px;" width="14" height="13" viewBox="0 0 14 13"><path d="M1.5 0.5 V12.5" stroke="#e8e8e8" stroke-width="1.2"/><rect x="0.5" y="1.5" width="3.5" height="3.5" fill="#ddd" stroke="#555" stroke-width="0.6"/><rect x="4.5" y="3" width="9" height="7" fill="#4b5966" stroke="#e4e4e4" stroke-width="1"/><path d="M7 12.3h4" stroke="#e4e4e4" stroke-width="1.2"/></svg>
<svg class="a" style="left:914px;top:683px;" width="12" height="12" viewBox="0 0 12 12"><rect x="0.5" y="0.5" width="11" height="11" rx="1" fill="#3d80d4" stroke="#2b63a8" stroke-width="0.8"/><path d="M3 2 V9.5 H10 M5 2.5 V7.5 H10 M7 3 V5.5 H10" fill="none" stroke="#cfe4ff" stroke-width="0.8"/></svg>
<svg class="a" style="left:933px;top:683px;" width="14" height="14" viewBox="0 0 14 14"><path d="M1.5 0.5 V13.5" stroke="#d8d8d8" stroke-width="1.3"/><path d="M2.3 1 H8 L9.5 2 H11.5 V7 H2.3z" fill="#f4f4f4" stroke="#999" stroke-width="0.4"/><circle cx="9.2" cy="9.5" r="3.9" fill="#e02f2f" stroke="#9a1a1a" stroke-width="0.5"/><path d="M7.6 7.9 L10.8 11.1 M10.8 7.9 L7.6 11.1" stroke="#fff" stroke-width="1.2"/></svg>
<div class="t" style="left:962.4px;top:678px;font-size:11px;color:#f4f7fa;transform:scaleX(0.8573);">3:54 AM</div>
<div class="t" style="left:959.3px;top:691px;font-size:10.5px;color:#f4f7fa;transform:scaleX(0.8798);">3/17/2015</div>
<div class="a" style="left:1008px;top:674px;width:12px;height:31px;background:linear-gradient(160deg,#a8b4c2,#6f7d8e);box-sizing:border-box;border:1px solid #4e5966;border-right:none;box-shadow:inset 1px 1px 0 rgba(255,255,255,0.35);"></div>
</body></html>
